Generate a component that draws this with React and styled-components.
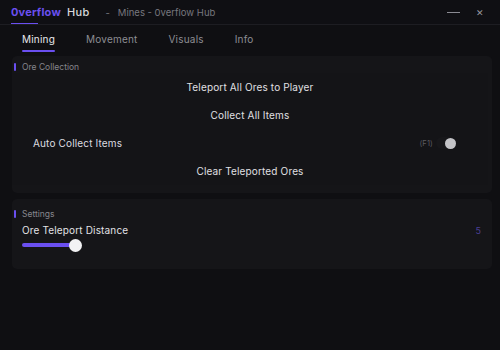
import React from "react";
import styled, { createGlobalStyle } from "styled-components";

const Global = createGlobalStyle`
  html, body { margin: 0; padding: 0; background: #0f0f12; }
  body { font-family: Inter, "Open Sans", sans-serif; color: #e6e6ea; }
  #root { width: 500px; height: 350px; }
`;

const ACCENT = "#6a4ff0";

const Window = styled.div`
  width: 500px;
  height: 350px;
  background: #0f0f12;
  display: flex;
  flex-direction: column;
  overflow: hidden;
`;

const TitleBar = styled.div`
  height: 24px;
  display: flex;
  align-items: center;
  padding: 0 16px 0 11px;
  border-bottom: 1px solid #1d1d22;
  background: #0f0f13;
`;

const Brand = styled.div`
  position: relative;
  display: flex;
  align-items: center;
  gap: 6px;
  font-size: 11px;
  height: 100%;
`;

const BrandAccent = styled.span`
  color: ${ACCENT};
  font-weight: 700;
  letter-spacing: 0.2px;
`;

const BrandHub = styled.span`
  color: #d8d8dc;
  font-weight: 500;
  letter-spacing: 0.3px;
`;

const BrandUnderline = styled.div`
  position: absolute;
  left: 0;
  bottom: 0;
  width: 27px;
  height: 1px;
  background: ${ACCENT};
`;

const Subtitle = styled.span`
  color: #77777e;
  font-size: 9.5px;
  margin-left: 16px;
  display: flex;
  gap: 8px;
`;

const Spacer = styled.div`
  flex: 1;
`;

const WinButtons = styled.div`
  display: flex;
  align-items: center;
  gap: 16px;
  color: #8a8a90;
`;

const Minimize = styled.div`
  width: 13px;
  height: 1px;
  background: #8a8a92;
`;

const Close = styled.div`
  font-size: 9px;
  color: #9a9aa0;
  line-height: 1;
`;

const Tabs = styled.div`
  height: 28px;
  display: flex;
  align-items: stretch;
  gap: 31px;
  padding: 0 22px;
`;

const Tab = styled.div`
  position: relative;
  display: flex;
  align-items: center;
  font-size: 10px;
  letter-spacing: 0.2px;
  color: ${(p) => (p.$active ? "#e8e8ec" : "#8d8d93")};
  &::after {
    content: "";
    display: ${(p) => (p.$active ? "block" : "none")};
    position: absolute;
    left: 0;
    right: 0;
    bottom: 1px;
    height: 2px;
    border-radius: 1px;
    background: ${ACCENT};
  }
`;

const Content = styled.div`
  display: flex;
  flex-direction: column;
  gap: 6px;
  padding: 3px 8px 0 12px;
`;

const Card = styled.div`
  background: #151518;
  border-radius: 5px;
  padding: ${(p) => p.$pad || "5px 4px 8px 0"};
  display: flex;
  flex-direction: column;
`;

const SectionHeader = styled.div`
  height: 12px;
  display: flex;
  align-items: center;
  gap: 6px;
  padding-left: 2px;
  font-size: 8.5px;
  color: #85858c;
`;

const Bar = styled.div`
  width: 2px;
  height: 8px;
  border-radius: 1px;
  background: ${ACCENT};
`;

const ButtonRow = styled.div`
  height: 28px;
  display: flex;
  align-items: center;
  justify-content: center;
  font-size: 10px;
  letter-spacing: 0.15px;
  color: #e0e0e4;
  background: #141417;
`;

const ToggleRow = styled.div`
  height: 28px;
  display: flex;
  align-items: center;
  padding: 0 32px 0 21px;
  font-size: 10px;
  letter-spacing: 0.15px;
  color: #dcdce0;
  background: #141417;
`;

const Keybind = styled.span`
  font-size: 7.5px;
  color: #5c5c62;
  margin-right: 3px;
`;

const Toggle = styled.div`
  width: 20px;
  height: 12px;
  border-radius: 6px;
  background: #17171a;
  display: flex;
  align-items: center;
  justify-content: flex-end;
`;

const Knob = styled.div`
  width: 11px;
  height: 11px;
  border-radius: 50%;
  background: #c4c4c8;
`;

const SliderLabelRow = styled.div`
  height: 16px;
  margin-top: 2px;
  display: flex;
  align-items: center;
  padding: 0 11px 0 10px;
  font-size: 10px;
  letter-spacing: 0.15px;
  color: #e2e2e6;
`;

const SliderValue = styled.span`
  color: #4b3f94;
  font-size: 9px;
`;

const SliderTrack = styled.div`
  position: relative;
  margin: 0 0 0 10px;
  width: 60px;
  height: 14px;
  display: flex;
  align-items: center;
`;

const SliderFill = styled.div`
  height: 4px;
  border-radius: 2px;
  background: ${ACCENT};
`;

const SliderKnob = styled.div`
  position: absolute;
  top: 1px;
  width: 13px;
  height: 13px;
  border-radius: 50%;
  background: #f2f2f4;
`;

export default function App() {
  const pct = 90;
  return (
    <>
      <Global />
      <Window>
        <TitleBar>
          <Brand>
            <BrandAccent>0verflow</BrandAccent>
            <BrandHub>Hub</BrandHub>
            <BrandUnderline />
          </Brand>
          <Subtitle>
            <span>-</span>
            <span>Mines - 0verflow Hub</span>
          </Subtitle>
          <Spacer />
          <WinButtons>
            <Minimize />
            <Close>✕</Close>
          </WinButtons>
        </TitleBar>
        <Tabs>
          <Tab $active>Mining</Tab>
          <Tab>Movement</Tab>
          <Tab>Visuals</Tab>
          <Tab>Info</Tab>
        </Tabs>
        <Content>
          <Card>
            <SectionHeader>
              <Bar />
              Ore Collection
            </SectionHeader>
            <ButtonRow>Teleport All Ores to Player</ButtonRow>
            <ButtonRow>Collect All Items</ButtonRow>
            <ToggleRow>
              Auto Collect Items
              <Spacer />
              <Keybind>(F1)</Keybind>
              <Toggle>
                <Knob />
              </Toggle>
            </ToggleRow>
            <ButtonRow>Clear Teleported Ores</ButtonRow>
          </Card>
          <Card $pad="9px 0 17px 0">
            <SectionHeader>
              <Bar />
              Settings
            </SectionHeader>
            <SliderLabelRow>
              Ore Teleport Distance
              <Spacer />
              <SliderValue>5</SliderValue>
            </SliderLabelRow>
            <SliderTrack>
              <SliderFill style={{ width: `${pct}%` }} />
              <SliderKnob style={{ left: `calc(${pct}% - 7px)` }} />
            </SliderTrack>
          </Card>
        </Content>
      </Window>
    </>
  );
}
